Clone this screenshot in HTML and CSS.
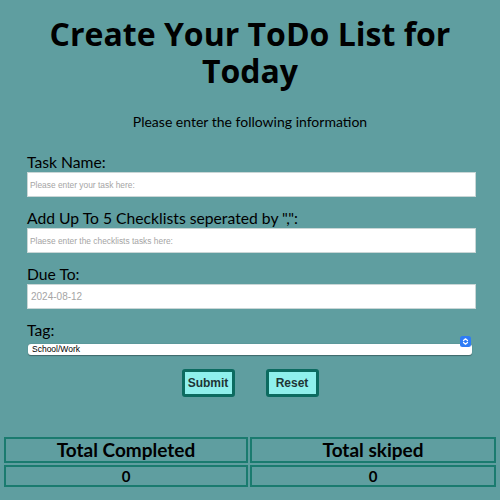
FILE: index.html
```html
<!DOCTYPE html>
<html>
<head>
<meta charset="utf-8">
<link rel="stylesheet" href="styles.css">
</head>
<body>
<header class="head">
  <h1 class="title">Create Your ToDo List for Today</h1>
  <p class="subtitle">Please enter the following information</p>
</header>
<form class="form">
  <label class="label">Task Name:</label>
  <input class="field" type="text" placeholder="Please enter your task here:">
  <label class="label">Add Up To 5 Checklists seperated by ",":</label>
  <input class="field" type="text" placeholder="Plaese enter the checklists tasks here:">
  <label class="label">Due To:</label>
  <input class="field date" type="text" placeholder="2024-08-12">
  <label class="label">Tag:</label>
  <div class="select-wrap">
    <select class="select"><option>School/Work</option></select>
    <svg class="select-icon" width="11" height="11" viewBox="0 0 11 11">
      <rect x="0" y="0" width="11" height="11" rx="2.5" fill="#2f7cf6"/>
      <path d="M3.5 4.5 L5.5 2.8 L7.5 4.5 M3.5 6.5 L5.5 8.2 L7.5 6.5" stroke="#fff" stroke-width="1.2" fill="none" stroke-linecap="round" stroke-linejoin="round"/>
    </svg>
  </div>
  <div class="buttons">
    <button class="btn" type="button">Submit</button>
    <button class="btn" type="button">Reset</button>
  </div>
</form>
<section class="totals">
  <div class="cell head-cell">Total Completed</div>
  <div class="cell head-cell">Total skiped</div>
  <div class="cell value-cell">0</div>
  <div class="cell value-cell">0</div>
</section>
</body>
</html>
```
FILE: styles.css
```css
html, body {
  margin: 0;
  padding: 0;
}
body {
  background: #5f9ea0;
  font-family: "Lato", "DejaVu Sans", sans-serif;
  color: #000;
  width: 500px;
  height: 500px;
  overflow: hidden;
}
.head {
  text-align: center;
  padding-top: 15px;
}
.title {
  font-family: "Open Sans", "DejaVu Sans", sans-serif;
  font-size: 32px;
  line-height: 37px;
  font-weight: 700;
  margin: 0 auto;
  width: 420px;
}
.subtitle {
  font-size: 14px;
  line-height: 18px;
  margin: 24px 0 0 0;
}
.form {
  display: flex;
  flex-direction: column;
  padding: 0 24px 0 27px;
  margin-top: 21px;
}
.label {
  font-size: 15.7px;
  line-height: 20px;
  display: block;
  margin-top: 11px;
}
.label:first-child {
  margin-top: 0;
}
.field {
  box-sizing: border-box;
  height: 25px;
  width: 449px;
  border: 1px solid #c9d6d6;
  background: #fff;
  padding: 0 2px;
  font-family: "Liberation Sans", sans-serif;
  font-size: 8.4px;
  outline: none;
}
.field::placeholder {
  color: #a5a5a5;
}
.date {
  padding-left: 3px;
  font-size: 10px;
}
.select-wrap {
  position: relative;
  width: 444px;
  height: 11px;
  margin-left: 1px;
  margin-top: -4px;
}
.select {
  appearance: none;
  -webkit-appearance: none;
  box-sizing: border-box;
  width: 444px;
  height: 11px;
  border: none;
  border-radius: 3px;
  background: #fff;
  box-shadow: 0 0.5px 1px rgba(0,0,0,0.35);
  font-family: "Liberation Sans", sans-serif;
  font-size: 8.5px;
  line-height: 11px;
  padding: 0 0 0 4px;
  color: #000;
  margin: 0;
}
.select-icon {
  position: absolute;
  right: 1px;
  top: 0;
}
.buttons {
  display: flex;
  justify-content: center;
  gap: 31px;
  margin-top: 22px;
  padding-right: 3px;
}
.btn {
  box-sizing: border-box;
  width: 53px;
  height: 28px;
  background: #8ff0ec;
  border: 3px solid #0c6b60;
  border-radius: 3px;
  font-family: "Liberation Sans", sans-serif;
  font-weight: 700;
  font-size: 12px;
  color: #1e3535;
  padding: 0;
}
.totals {
  display: grid;
  grid-template-columns: 244px 246px;
  column-gap: 2px;
  row-gap: 2px;
  padding: 0 4px;
  margin-top: 40px;
}
.cell {
  box-sizing: border-box;
  border: 2px solid #1a7b6f;
  text-align: center;
  font-weight: 700;
}
.head-cell {
  height: 26px;
  font-size: 19px;
  line-height: 22px;
}
.value-cell {
  height: 22px;
  font-size: 15px;
  line-height: 18px;
}
```
